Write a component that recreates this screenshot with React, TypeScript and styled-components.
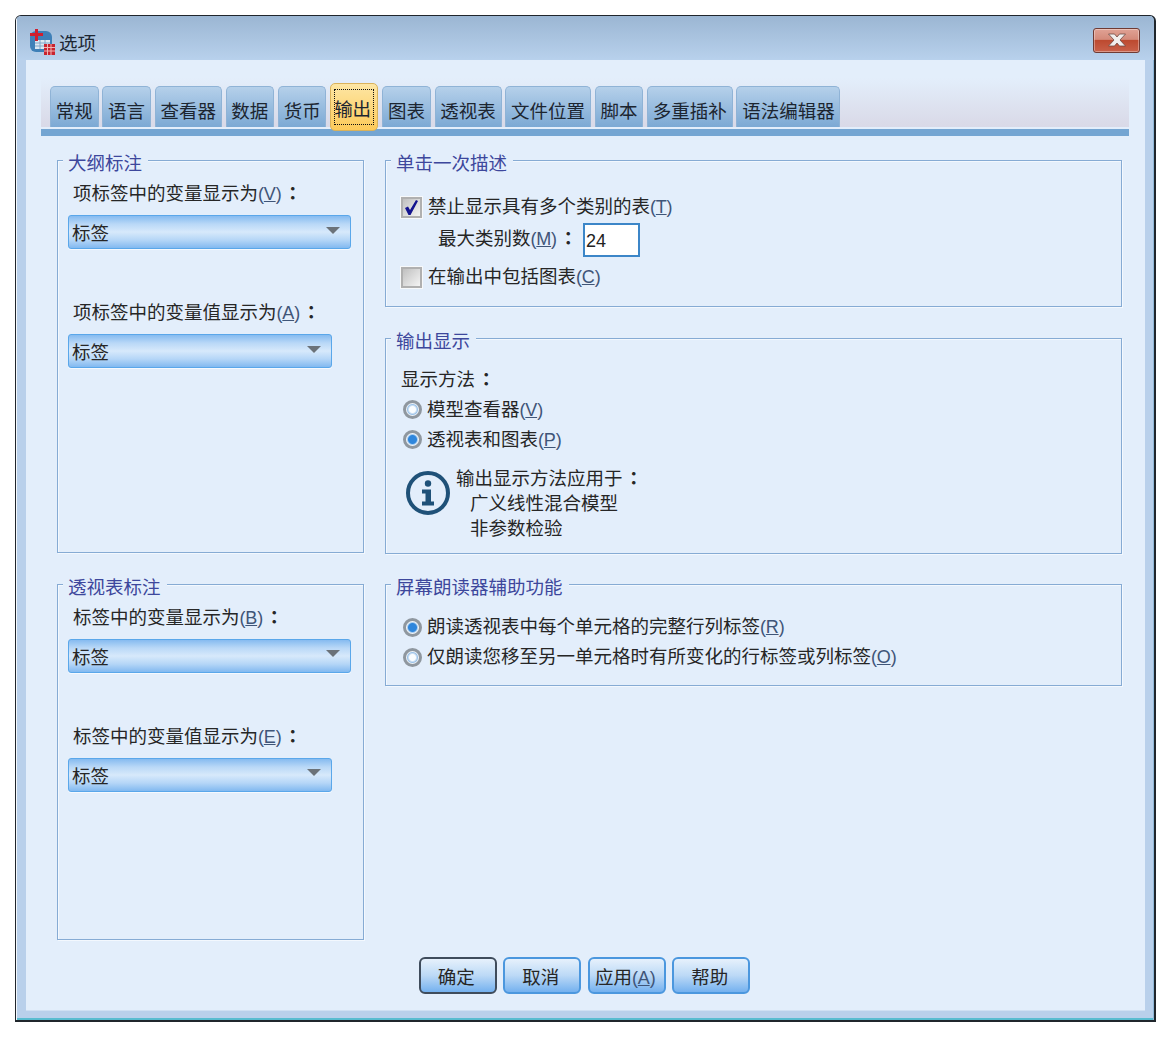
import React from "react";
import styled, { createGlobalStyle, css } from "styled-components";

const Global = createGlobalStyle`
  html, body { margin: 0; padding: 0; background: #fff; }
  * { box-sizing: border-box; }
  body { font-family: "Noto Sans CJK SC", "Liberation Sans", sans-serif; font-size: 18.5px; color: #262626; }
`;

const Win = styled.div`
  width: 1141px; height: 1007px; margin: 15px 0 0 15px;
  display: flex; flex-direction: column;
  border: 1px solid #20262c; border-width: 1px 2px 2px 1px;
  border-radius: 6px 6px 0 0;
  background: #b9d0eb;
  box-shadow: inset 1px 0 0 #f4f8fc, inset -1px 0 0 #8fb8d8, inset 0 -2px 0 #58bcd0;
  overflow: hidden;
`;
const TitleBar = styled.div`
  height: 44px; flex: none; display: flex; align-items: center;
  padding: 7px 14px 0 13px;
  background: linear-gradient(#9bb6d3, #b8d1ec);
  box-shadow: inset 1px 0 0 #f4f8fc;
`;
const TitleText = styled.span` margin-left: 4px; line-height: 26px; color: #1d2733; `;
const CloseBtn = styled.div`
  margin: -3px 0 0 auto; width: 47px; height: 25px;
  display: flex; align-items: center; justify-content: center;
  border: 1px solid #6f3b34; border-radius: 3px;
  background: linear-gradient(#e0a295 0%, #d48a7a 45%, #bd4a30 50%, #c9614a 100%);
  box-shadow: inset 0 0 0 1px rgba(255,255,255,.35);
`;
const Content = styled.div`
  margin: 0 9px 10px 10px; flex: 1; padding-top: 18px;
  display: flex; flex-direction: column;
  background: #e3eefb;
  box-shadow: 0 1px 0 #cfe0f3;
`;
const TabStrip = styled.div`
  margin: 0 16px 0 15px; height: 49px; padding-left: 9px;
  display: flex; align-items: flex-end; gap: 3.85px;
  background: linear-gradient(#e3eefb, #d9d9e7);
`;
const activeTab = css`
  height: 48px; width: 48px; margin-bottom: -4px; padding: 5px 3px;
  border: 1px solid #d9b25c; border-radius: 5px;
  background: linear-gradient(#fde6a4, #fdca59);
  position: relative; z-index: 1;
`;
const Tab = styled.div<{ $active?: boolean }>`
  height: 41px; padding: 10px 4.75px 0; line-height: 27px; white-space: nowrap;
  border-radius: 5px 5px 0 0;
  border: 1px solid #8fb3d6; border-bottom: none;
  background: linear-gradient(#b5d0ea, #7ca9d4);
  color: #1c2530;
  ${p => p.$active && activeTab}
`;
const TabFocus = styled.div`
  height: 100%; line-height: 36px; border: 1px dotted #111;
  overflow: hidden; letter-spacing: -.3px;
  white-space: nowrap; text-indent: -1px;
`;
const TabRule = styled.div`
  height: 7px; margin: 2px 16px 0 15px; background: #74a5d2;
`;
const Columns = styled.div`
  display: grid; grid-template-columns: 307px 737px; column-gap: 21px;
  padding: 24px 0 0 31px;
`;
const Column = styled.div`
  display: flex; flex-direction: column; row-gap: 30.5px;
`;
const Group = styled.section<{ $h: number }>`
  height: ${p => p.$h}px; padding: 0 10px 0 10px;
  border: 1px solid #86abd4;
  box-shadow: 1px 1px 0 #f3f8fe, inset 1px 1px 0 #f3f8fe;
`;
const WideGroup = styled(Group)` padding-left: 15px; `;
const Legend = styled.div`
  width: fit-content; height: 24px; line-height: 28px; margin: -13px 0 0 -5px;
  padding: 0 6px 0 5px; background: #e3eefb; color: #3d479c;
  white-space: nowrap;
`;
const WideLegend = styled(Legend)` margin-left: -10px; `;
const Label = styled.div`
  height: 26px; line-height: 24px; margin: 8px 0 9px 5px; white-space: nowrap;
`;
const LabelLow = styled(Label)` margin-top: 50px; `;
const Mn = styled.span`
  font-family: "Liberation Sans", sans-serif; font-size: 18px; color: #3f5578;
  letter-spacing: -.2px;
`;
const U = styled.span` text-decoration: underline; `;
const Colon = styled.span`
  font-family: "Noto Sans CJK TC", sans-serif; font-weight: 700; margin-left: 2px;
`;
const Select = styled.div<{ $w: number }>`
  width: ${p => p.$w}px; height: 34px; padding: 0 10px 0 3px;
  display: flex; align-items: center; justify-content: space-between;
  border: 1px solid #5aa7ea; border-radius: 3px;
  background: linear-gradient(#86bbf0 0%, #b9d8f7 25%, #d7e9fb 50%, #b5d6f7 75%, #82b9f0 100%);
  box-shadow: 0 1px 0 #f5f9ff;
`;
const Arrow = styled.span`
  width: 0; height: 0; margin-top: -4px;
  border-left: 7px solid transparent; border-right: 7px solid transparent;
  border-top: 7px solid #6b7279;
`;
const Row = styled.div<{ $mt: number; $gap?: number }>`
  display: flex; align-items: center; height: 26px; white-space: nowrap;
  margin-top: ${p => p.$mt}px;
  column-gap: ${p => p.$gap ?? 0}px;
`;
const RowText = styled.span` height: 26px; line-height: 22px; `;
const CheckBox = styled.span`
  width: 21px; height: 21px; flex: none; display: flex; align-items: center; justify-content: center;
  border: 2px solid #b0b0b0; outline: 1px solid #f7f9fb;
  background: linear-gradient(135deg, #c0c0c0, #f4f4f4);
`;
const Radio = styled.span<{ $on?: boolean }>`
  width: 19px; height: 19px; flex: none; margin-left: 2px; border-radius: 50%;
  border: 3px solid #8f979f;
  background: ${p => p.$on ? "radial-gradient(circle, #2f86dc 0 4px, #a9cdf0 5px, #f3f7fb 6px)" : "radial-gradient(circle, #fafdff 0 3px, #9dc3e8 5px, #eef3f8 6px)"};
`;
const InputRow = styled.div`
  display: flex; align-items: center; height: 34px; margin-top: 3px; padding-left: 37px;
`;
const InputLabel = styled.span` width: 145px; padding-bottom: 5px; white-space: nowrap; line-height: 26px; `;
const Input = styled.div`
  width: 57px; height: 34px; padding: 1px 0 0 1px; line-height: 30px;
  border: 2px solid #3c86c8; background: #fff;
  font-family: "Liberation Sans", sans-serif; font-size: 18px; color: #222;
`;
const Notice = styled.div` display: flex; margin-top: 13px; padding-left: 5px; `;
const NoticeLines = styled.div` margin-left: 6px; `;
const NoticeLine = styled.div<{ $indent?: boolean }>`
  height: 25px; line-height: 22px; white-space: nowrap;
  padding-left: ${p => p.$indent ? 14 : 0}px;
`;
const IconSlot = styled.svg` margin-top: 5px; flex: none; `;
const Buttons = styled.div`
  display: flex; justify-content: center; column-gap: 6.5px; margin: 17px 2px 0 0;
`;
const Button = styled.div<{ $def?: boolean }>`
  width: 78px; height: 37px; padding-right: 3px; line-height: 35px; text-align: center; white-space: nowrap;
  border: 2px solid ${p => p.$def ? "#3f4c5c" : "#4b97de"};
  border-radius: 6px;
  background: linear-gradient(#e6f1fc, #bcd9f6 50%, #74b1ef);
`;

const Mnem = ({ c }: { c: string }) => <Mn>(<U>{c}</U>)</Mn>;

const Check = () => (
  <svg width="17" height="17" viewBox="0 0 17 17"><path d="M2 9 L5 7.5 L7 11 L13 1 L15 2 L7.5 16 L5.5 16 Z" fill="#14148f" /></svg>
);

const AppIcon = () => (
  <svg width="26" height="26" viewBox="0 0 26 26">
    <rect x="1" y="2" width="22" height="21" rx="6" fill="#3f80b8" />
    <path d="M6 11h15v9H6z" fill="#dbe7f2" />
    <path d="M6 14h15M6 17h15M11 11v9M16 11v9" stroke="#7fa5c8" />
    <path d="M6 0h3v4h5v3H9v5H6V7H1V4h5z" fill="#d01f2f" />
    <rect x="15" y="15" width="11" height="11" fill="#c8232f" />
    <path d="M15 18.5h11M15 22h11M18.5 15v11M22 15v11" stroke="#f0b4b4" />
  </svg>
);

const CloseX = () => (
  <svg width="20" height="14" viewBox="0 0 20 14">
    <path d="M1.5 1h6l2.5 3 2.5-3h6l-5.5 6 5.5 6h-6l-2.5-3-2.5 3h-6L7 7z" fill="#f2eeed" stroke="#6f4a44" strokeWidth=".8" />
  </svg>
);

const InfoIcon = () => (
  <IconSlot width="44" height="44" viewBox="0 0 44 44">
    <circle cx="22" cy="22" r="20" fill="none" stroke="#1f5178" strokeWidth="4" />
    <circle cx="22" cy="12.5" r="3.2" fill="#1f5178" />
    <path d="M16 18.5h9v12h3v4H16v-4h3.5v-8H16z" fill="#1f5178" />
  </IconSlot>
);

const tabs = ["常规", "语言", "查看器", "数据", "货币", "输出", "图表", "透视表", "文件位置", "脚本", "多重插补", "语法编辑器"];

export default function App() {
  return (
    <>
      <Global />
      <Win>
        <TitleBar>
          <AppIcon />
          <TitleText>选项</TitleText>
          <CloseBtn><CloseX /></CloseBtn>
        </TitleBar>
        <Content>
          <TabStrip>
            {tabs.map(t => t === "输出"
              ? <Tab key={t} $active><TabFocus>{t}</TabFocus></Tab>
              : <Tab key={t}>{t}</Tab>)}
          </TabStrip>
          <TabRule />
          <Columns>
            <Column>
              <Group $h={393}>
                <Legend>大纲标注</Legend>
                <Label>项标签中的变量显示为<Mnem c="V" /><Colon>：</Colon></Label>
                <Select $w={283}>标签<Arrow /></Select>
                <LabelLow>项标签中的变量值显示为<Mnem c="A" /><Colon>：</Colon></LabelLow>
                <Select $w={264}>标签<Arrow /></Select>
              </Group>
              <Group $h={356}>
                <Legend>透视表标注</Legend>
                <Label>标签中的变量显示为<Mnem c="B" /><Colon>：</Colon></Label>
                <Select $w={283}>标签<Arrow /></Select>
                <LabelLow>标签中的变量值显示为<Mnem c="E" /><Colon>：</Colon></LabelLow>
                <Select $w={264}>标签<Arrow /></Select>
              </Group>
            </Column>
            <Column>
              <WideGroup $h={147}>
                <WideLegend>单击一次描述</WideLegend>
                <Row $mt={22} $gap={6}><CheckBox><Check /></CheckBox><RowText>禁止显示具有多个类别的表<Mnem c="T" /></RowText></Row>
                <InputRow>
                  <InputLabel>最大类别数<Mnem c="M" /><Colon>：</Colon></InputLabel>
                  <Input>24</Input>
                </InputRow>
                <Row $mt={7} $gap={6}><CheckBox /><RowText>在输出中包括图表<Mnem c="C" /></RowText></Row>
              </WideGroup>
              <WideGroup $h={216}>
                <WideLegend>输出显示</WideLegend>
                <Row $mt={17}><RowText>显示方法<Colon>：</Colon></RowText></Row>
                <Row $mt={4} $gap={5}><Radio /><RowText>模型查看器<Mnem c="V" /></RowText></Row>
                <Row $mt={4} $gap={5}><Radio $on /><RowText>透视表和图表<Mnem c="P" /></RowText></Row>
                <Notice>
                  <InfoIcon />
                  <NoticeLines>
                    <NoticeLine>输出显示方法应用于<Colon>：</Colon></NoticeLine>
                    <NoticeLine $indent>广义线性混合模型</NoticeLine>
                    <NoticeLine $indent>非参数检验</NoticeLine>
                  </NoticeLines>
                </Notice>
              </WideGroup>
              <WideGroup $h={102}>
                <WideLegend>屏幕朗读器辅助功能</WideLegend>
                <Row $mt={18} $gap={5}><Radio $on /><RowText>朗读透视表中每个单元格的完整行列标签<Mnem c="R" /></RowText></Row>
                <Row $mt={4} $gap={5}><Radio /><RowText>仅朗读您移至另一单元格时有所变化的行标签或列标签<Mnem c="O" /></RowText></Row>
              </WideGroup>
            </Column>
          </Columns>
          <Buttons>
            <Button $def>确定</Button>
            <Button>取消</Button>
            <Button>应用<Mnem c="A" /></Button>
            <Button>帮助</Button>
          </Buttons>
        </Content>
      </Win>
    </>
  );
}
